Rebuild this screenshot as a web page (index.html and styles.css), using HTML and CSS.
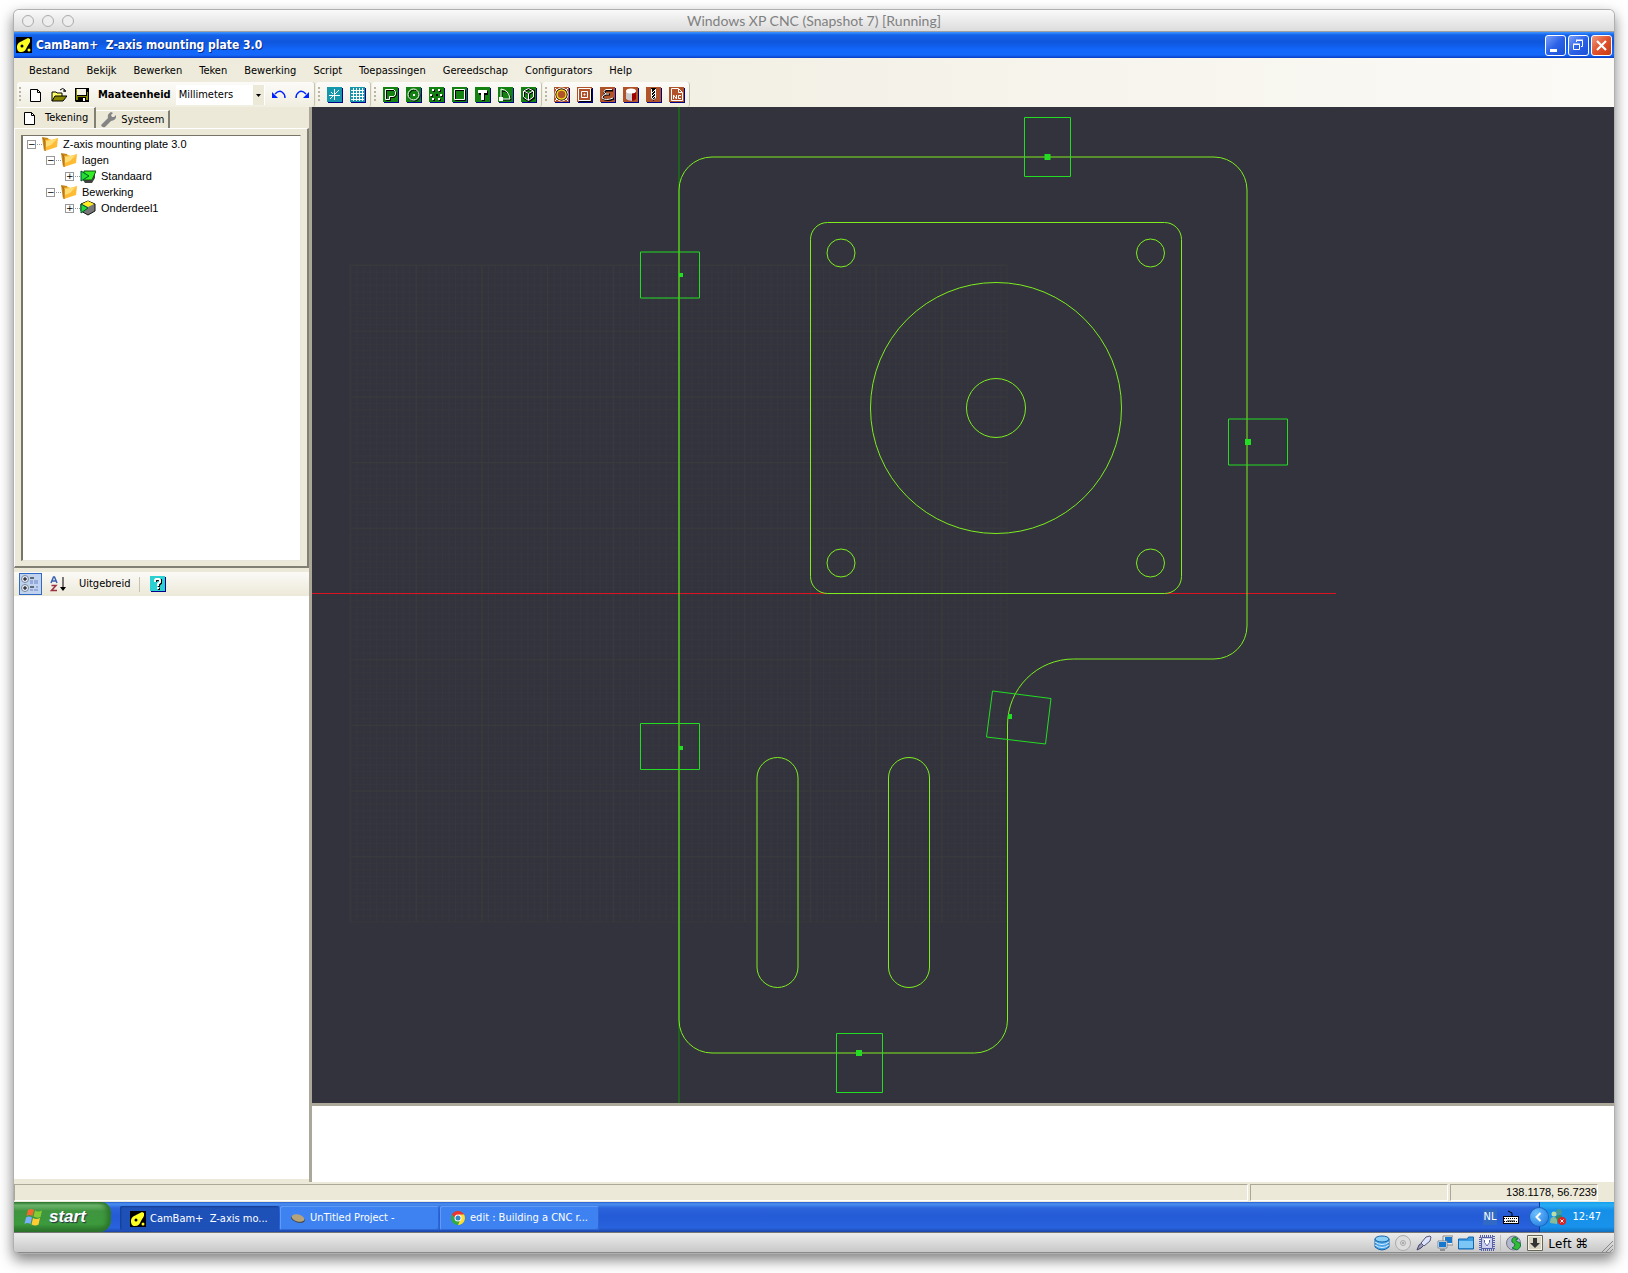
FILE: index.html
```
<!DOCTYPE html>
<html lang="nl">
<head>
  <meta charset="UTF-8">
  <title>Windows XP CNC (Snapshot 7) [Running]</title>
  <link rel="stylesheet" href="styles.css">
</head>
<body>
  <!-- shared icons -->
  <svg class="defs" width="0" height="0">
    <defs>
      <symbol id="cambam" viewBox="0 0 16 16">
        <rect width="16" height="16" fill="#000"/>
        <path d="M1 10C1 6 4 5 8 3l4-2 2 1v3l-3 5c-1 3-3 5-6 5S1 13 1 10z" fill="#ff2"/>
        <circle cx="6" cy="9" r="1.500"/><circle cx="13" cy="13" r="1.500" fill="#ff2"/>
      </symbol>
      <symbol id="page" viewBox="0 0 16 16">
        <path d="M2.500 2.500h7l3 3v9h-10z" fill="#fff" stroke="#000"/><path d="M9.500 2.500v3h3" fill="none" stroke="#000"/>
      </symbol>
      <symbol id="folder" viewBox="0 0 16 16">
        <path d="M0 1l6 1 1 2-5 11z" fill="#c68a1c"/>
        <path d="M3 4l5-1 1 1 7-2-1 9-12 4z" fill="#fb3"/><path d="M4 5l11-2-6 6-5 2z" fill="#fd7"/>
        <path d="M1 2l2 3v10" fill="none" stroke="#a76b12"/>
      </symbol>
      <symbol id="green" viewBox="0 0 16 16">
        <rect x="1" y="1" width="15" height="15" fill="#008"/><rect width="15" height="15" fill="#138213"/>
      </symbol>
      <symbol id="brown" viewBox="0 0 16 16">
        <rect x="1" y="1" width="15" height="15" fill="#008"/><rect width="15" height="15" fill="#b0522a"/>
      </symbol>
    </defs>
  </svg>

  <main class="window">
    <header class="mac-title">
      <div class="lights"><i></i><i></i><i></i></div>
      <span>Windows XP CNC (Snapshot 7) [Running]</span>
    </header>

    <div class="xp-title">
      <svg class="icon"><use href="#cambam"/></svg>
      <h1>CamBam+&nbsp; Z-axis mounting plate 3.0</h1>
      <button class="win-btn" aria-label="Minimize"><svg viewBox="0 0 19 19"><path d="M4 13h7v3H4z" fill="#fff"/></svg></button>
      <button class="win-btn" aria-label="Restore"><svg viewBox="0 0 19 19" fill="none" stroke="#fff"><path d="M4.500 8.500h6v5h-6zM4 8h7M7.500 6V4.500h6v6H12M7 4h7"/></svg></button>
      <button class="win-btn close" aria-label="Close"><svg viewBox="0 0 19 19"><path d="M5 5l9 9M14 5l-9 9" stroke="#fff" stroke-width="2.200"/></svg></button>
    </div>

    <nav class="menu">
      <button>Bestand</button><button>Bekijk</button><button>Bewerken</button><button>Teken</button><button>Bewerking</button><button>Script</button><button>Toepassingen</button><button>Gereedschap</button><button>Configurators</button><button>Help</button>
    </nav>

    <div class="toolbars">
      <div class="bar bar-file">
        <i class="grip"></i>
        <button aria-label="Nieuw"><svg class="icon"><use href="#page"/></svg></button>
        <button aria-label="Openen"><svg class="icon" viewBox="0 0 16 16"><path d="M1 14V5h4l1 1h5v3" fill="#ff6" stroke="#000"/><path d="M1 14l3-5h12l-4 5z" fill="#880" stroke="#000"/><path d="M9 3q3-3 5 0v2m-2-1h3" fill="none" stroke="#000"/></svg></button>
        <button aria-label="Opslaan"><svg class="icon" viewBox="0 0 16 16"><path d="M1 1h14v14H2l-1-1z"/><path d="M3 2h9v6H3z" fill="#f5f3e8"/><path d="M2 2h1v7h10V5h1v8H2z" fill="#880"/><path d="M4 10h8v5H4z"/><path d="M9 11h2v3H9z" fill="#fff"/></svg></button>
        <label for="unit">Maateenheid</label>
        <div class="unit">
          <select id="unit"><option>Millimeters</option><option>Inches</option></select>
          <svg viewBox="0 0 11 20"><path d="M3 9h5l-2.500 3z"/></svg>
        </div>
        <button aria-label="Ongedaan maken"><svg class="icon" viewBox="0 0 16 16"><path d="M4 7q4-4 7-2 3 2 3 6" fill="none" stroke="#02f" stroke-width="1.500"/><path d="M1 5v6h6z" fill="#02f"/></svg></button>
        <button aria-label="Opnieuw"><svg class="icon" viewBox="0 0 16 16"><path d="M12 7Q8 3 5 5q-3 2-3 6" fill="none" stroke="#02f" stroke-width="1.500"/><path d="M15 5v6H9z" fill="#02f"/></svg></button>
      </div>
      <div class="bar">
        <i class="grip"></i>
        <button aria-label="Snap"><svg class="icon" viewBox="0 0 16 16"><rect x="1" y="1" width="15" height="15" fill="#008"/><rect width="15" height="15" fill="#1697ac"/><path d="M7.500 2v11M2 8.500h11M3 12l9-9M4 5l2 2" stroke="#fff" fill="none"/></svg></button>
        <button aria-label="Raster"><svg class="icon" viewBox="0 0 16 16"><rect x="1" y="1" width="15" height="15" fill="#008"/><rect width="15" height="15" fill="#1697ac"/><path d="M3.500 1v13M6.500 1v13M9.500 1v13M12.500 1v13M1 3.500h13M1 6.500h13M1 9.500h13M1 12.500h13" stroke="#fff"/></svg></button>
      </div>
      <div class="bar">
        <i class="grip"></i>
        <button aria-label="Polylijn"><svg class="icon" viewBox="0 0 16 16"><use href="#green"/><path d="M3.500 3.500h8l2 2v3l-2 2h-4v3h-4z" fill="none" stroke="#000"/><path d="M2.500 2.500h8l2 2v3l-2 2h-4v3h-4z" fill="none" stroke="#fff"/></svg></button>
        <button aria-label="Cirkel"><svg class="icon" viewBox="0 0 16 16"><use href="#green"/><circle cx="8.500" cy="8.500" r="5.500" fill="none" stroke="#000"/><circle cx="7.500" cy="7.500" r="5.500" fill="none" stroke="#fff"/><path d="M7 7h2v2H7z" fill="#fff"/></svg></button>
        <button aria-label="Puntenlijst"><svg class="icon" viewBox="0 0 16 16"><use href="#green"/><path d="M4 3h2v2H4zM10 3h2v2h-2zM2 8h2v2H2zM7 7h2v2H7zM12 8h2v2h-2zM4 12h2v2H4zM10 12h2v2h-2z"/><path d="M3 2h2v2H3zM9 2h2v2H9zM1 7h2v2H1zM11 7h2v2h-2zM3 11h2v2H3zM9 11h2v2H9z" fill="#fff"/></svg></button>
        <button aria-label="Rechthoek"><svg class="icon" viewBox="0 0 16 16"><use href="#green"/><path d="M3.500 3.500h10v10h-10z" fill="none" stroke="#000"/><path d="M2.500 2.500h10v10h-10z" fill="none" stroke="#fff"/></svg></button>
        <button aria-label="Tekst"><svg class="icon" viewBox="0 0 16 16"><use href="#green"/><path d="M4 4h9v4h-3v6H7V8H4z"/><path d="M3 3h9v3H9v7H6V6H3z" fill="#fff"/></svg></button>
        <button aria-label="Boog"><svg class="icon" viewBox="0 0 16 16"><use href="#green"/><path d="M4 13V4q8 0 9 9z" fill="none" stroke="#000"/><path d="M3 12V2q8 1 9 10z" fill="none" stroke="#fff"/><path d="M1 10h4v4H1z" fill="#fff"/></svg></button>
        <button aria-label="Oppervlak"><svg class="icon" viewBox="0 0 16 16"><use href="#green"/><path d="M8 2l5 2v7l-5 3-5-3V4zM3 4l5 3 5-3M8 7v7" fill="none" stroke="#000" stroke-width="2"/><path d="M7.500 1.500l5 2.500v6l-5 3.500-5-3.500V4zM3 4l4.500 2.500L12 4M7.500 7v6" fill="none" stroke="#fff"/></svg></button>
      </div>
      <div class="bar">
        <i class="grip"></i>
        <button aria-label="Profiel"><svg class="icon" viewBox="0 0 16 16"><use href="#brown"/><circle cx="7.500" cy="7.500" r="6.500" fill="none" stroke="#fff"/><circle cx="7.500" cy="7.500" r="5" fill="#b0522a" stroke="#000" stroke-width="2"/><circle cx="7.500" cy="7.500" r="4.500" fill="none" stroke="#fd2" stroke-width="1.500"/><path d="M1 1l2 2M14 1l-2 2M1 14l2-2M14 14l-2-2" stroke="#fff"/></svg></button>
        <button aria-label="Kamer"><svg class="icon" viewBox="0 0 16 16"><use href="#brown"/><path d="M1.500 1.500h12v12h-12zM4.500 4.500h6v6h-6zM7 7h1v1H7z" fill="none" stroke="#fff"/><path d="M2 14.500h12.500V2" fill="none" stroke="#000"/></svg></button>
        <button aria-label="Graveren"><svg class="icon" viewBox="0 0 16 16"><use href="#brown"/><path d="M13 3.500H6q-3 2 0 4h4M6 7.500q-4 1-3 4 4 3 11 0" fill="none" stroke="#000" stroke-width="2"/><path d="M12 2.500H6q-4 2 0 4.500h3M6 7q-4 1-4 4 4 3 11 0" fill="none" stroke="#fff"/></svg></button>
        <button aria-label="3D profiel"><svg class="icon" viewBox="0 0 16 16"><use href="#brown"/><path d="M3 4h10v8q-5 4-10 0z" fill="#a00000"/><path d="M3 4h6v10q-4 0-6-2z" fill="#ccc"/><ellipse cx="8" cy="4" rx="5" ry="2.500" fill="#fff"/></svg></button>
        <button aria-label="Boren"><svg class="icon" viewBox="0 0 16 16"><use href="#brown"/><path d="M5 1h5v10l-2.500 3L5 11z"/><path d="M5.500 2v9l2 2 2-2V2M9 3L6 6M9 6L6 9M9 9l-3 3" fill="none" stroke="#fff"/></svg></button>
        <button aria-label="NC bestand"><svg class="icon" viewBox="0 0 16 16"><use href="#brown"/><path d="M2.500 1.500h7l4 4v8h-11zM9.500 2v3.500H13" fill="none" stroke="#fff"/><path d="M4.500 12V8l3 4V8M12 8.500H9.500v3H12" fill="none" stroke="#fff"/></svg></button>
      </div>
    </div>

    <div class="workspace">
      <aside class="side">
        <div class="tabs">
          <button class="tab active"><svg class="icon"><use href="#page"/></svg>Tekening</button>
          <button class="tab"><svg class="icon" viewBox="0 0 16 16"><path d="M1 13l7-7q-1-4 3-6l2 1-2 2 1 2 2 0 2-2q1 5-5 6l-6 6q-3 1-4-2z" fill="#848484"/></svg>Systeem</button>
        </div>
        <div class="tab-page">
          <ul class="tree">
            <li><div class="row"><button class="exp">&minus;</button><svg class="icon"><use href="#folder"/></svg><span>Z-axis mounting plate 3.0</span></div>
              <ul>
                <li><div class="row"><button class="exp">&minus;</button><svg class="icon"><use href="#folder"/></svg><span>lagen</span></div>
                  <ul>
                    <li><div class="row"><button class="exp">+</button><svg class="icon" viewBox="0 0 16 16"><path d="M3 12h9l3-7v5l-3 5H5z" fill="#444"/><path d="M4 3h12l-4 9H3z" fill="#3e2" stroke="#174d17"/><path d="M1 3l8 5-8 5z" fill="#2d3" stroke="#053"/></svg><span>Standaard</span></div></li>
                  </ul>
                </li>
                <li><div class="row"><button class="exp">&minus;</button><svg class="icon"><use href="#folder"/></svg><span>Bewerking</span></div>
                  <ul>
                    <li><div class="row"><button class="exp">+</button><svg class="icon" viewBox="0 0 16 16"><path d="M8 1l7 3v7l-7 4-7-4V4z" fill="#777" stroke="#111"/><path d="M8 1l6 3-6 3-6-3z" fill="#fe2"/><path d="M1 4l7 4-7 5z" fill="#2d3" stroke="#053"/></svg><span>Onderdeel1</span></div></li>
                  </ul>
                </li>
              </ul>
            </li>
          </ul>
        </div>
        <div class="prop-bar">
          <button class="on" aria-label="Categorie"><svg class="icon" viewBox="0 0 18 18"><g fill="#e4ecfa" stroke="#789"><circle cx="4" cy="4" r="3.500"/><circle cx="4" cy="13" r="3.500"/></g><path d="M2 4h4M4 2v4M2 13h4M4 11v4M9 3h4M9 12h4" stroke="#000"/><path d="M9 6h3M13 6h4M9 8h3M13 8h4M9 15h3M13 15h4M15 12h2" stroke="#6a82c8"/></svg></button>
          <button aria-label="Alfabetisch"><svg class="icon" viewBox="0 0 16 16"><path d="M1 7l2.500-6h1L7 7M2 5h4" fill="none" stroke="#3b62b0" stroke-width="1.500"/><path d="M1.500 9.500H6l-4.500 5H7" fill="none" stroke="#9b3040" stroke-width="1.500"/><path d="M13 1v12" stroke="#000"/><path d="M10 11h6l-3 4z"/></svg></button>
          <button class="adv">Uitgebreid</button>
          <i class="sep"></i>
          <button aria-label="Help"><svg class="icon" viewBox="0 0 16 16"><rect x="1" y="1" width="15" height="15" fill="#008"/><rect width="15" height="15" fill="#2cd0d0"/><path d="M6 6V4h5v3L9 9v2M9 12v2" fill="none" stroke="#000" stroke-width="2"/><path d="M5 6V4l1-1h3l1 1v2L8 8v2M8 11v2" fill="none" stroke="#fff" stroke-width="2"/></svg></button>
        </div>
        <div class="props"></div>
      </aside>

      <section class="main">
        <!-- origin is the crossing of the two axes -->
        <svg class="canvas" viewBox="-367 -486 1302 996" preserveAspectRatio="xMidYMid slice">
          <defs>
            <pattern id="minor" width="6.570" height="6.570" patternUnits="userSpaceOnUse"><path d="M0 0h6.570M0 0v6.570" stroke="#383a3e" fill="none"/></pattern>
            <pattern id="major" width="65.700" height="65.700" patternUnits="userSpaceOnUse"><path d="M0 0h65.700M0 0v65.700" stroke="#393a3c" stroke-width="2" fill="none"/></pattern>
          </defs>
          <g transform="translate(-329 -328)">
            <rect width="657" height="657" fill="url(#minor)"/>
            <rect width="657" height="657" fill="url(#major)" stroke="#38393c"/>
          </g>
          <path class="axis-y" d="M0-486V510"/>
          <path class="axis-x" d="M-367 .500H657"/>
          <g class="part">
            <path d="M33-436H535A33 33 0 0 1 568-403V33A33 33 0 0 1 535 66H394.500A66 66 0 0 0 328.500 132V427A33 33 0 0 1 295.500 460H33A33 33 0 0 1 0 427V-403A33 33 0 0 1 33-436Z"/>
            <rect x="131.500" y="-370.500" width="371" height="371" rx="17"/>
            <circle cx="162" cy="-340" r="14"/>
            <circle cx="471.500" cy="-340" r="14"/>
            <circle cx="162" cy="-30" r="14"/>
            <circle cx="471.500" cy="-30" r="14"/>
            <circle cx="317" cy="-185" r="125.500"/>
            <circle cx="317" cy="-185" r="29.500"/>
            <rect x="78" y="164.500" width="41" height="230" rx="20.500"/>
            <rect x="209.500" y="164.500" width="41" height="230" rx="20.500"/>
          </g>
          <g class="tab-box">
            <rect x="345.500" y="-475.500" width="46" height="59"/>
            <rect x="-38.500" y="-341" width="59" height="46"/>
            <rect x="-38.500" y="130.500" width="59" height="46"/>
            <rect x="549.500" y="-174" width="59" height="46"/>
            <rect x="157.500" y="440.500" width="46" height="59"/>
            <path d="M313.500 98l58.500 7.500-5.500 45.500-59-7z"/>
          </g>
          <g class="tab-dot">
            <rect x="365.500" y="-439" width="6" height="6"/>
            <rect x="0" y="-320" width="4" height="4"/>
            <rect x="0" y="153" width="4" height="4"/>
            <rect x="566" y="-154" width="6" height="6"/>
            <rect x="177" y="457" width="6" height="6"/>
            <rect x="329" y="121" width="4" height="5"/>
          </g>
        </svg>
        <div class="console"></div>
      </section>
    </div>

    <footer class="status">
      <span></span><span></span><span>138.1178, 56.7239</span>
    </footer>

    <div class="taskbar">
      <button class="start">
        <svg viewBox="0 0 20 20"><path d="M4 3q3-2 6 0L8.500 9q-3-2-6 0z" fill="#f26a2e"/><path d="M11 3.500q3 2 7 0L16.500 10q-3 1.500-7-.500z" fill="#8c3"/><path d="M2 10.500q3-2 6 0L6.500 17q-3-2-6 0z" fill="#7ab0ff"/><path d="M9 11q3 2 7 0l-1.500 6.500q-3 2-7 0z" fill="#fc3"/></svg>start
      </button>
      <div class="tasks">
        <button class="task current"><svg class="icon"><use href="#cambam"/></svg>CamBam+&nbsp; Z-axis mo...</button>
        <button class="task"><svg class="icon" viewBox="0 0 16 16"><ellipse cx="8" cy="9" rx="7" ry="3.500" transform="rotate(15 8 9)" fill="#444"/><ellipse cx="8" cy="8" rx="6.500" ry="3.500" transform="rotate(15 8 8)" fill="#b6a37c"/></svg>UnTitled Project -</button>
        <button class="task"><svg class="icon" viewBox="0 0 16 16"><circle cx="8" cy="8" r="7" fill="#3a4"/><path d="M2 4.500a7 7 0 0 1 12 0L8 8H5z" fill="#e33"/><path d="M14 4.500A7 7 0 0 1 8 15l3-7-2-3.500z" fill="#fd3"/><circle cx="8" cy="8" r="3.500" fill="#fff"/><circle cx="8" cy="8" r="2.500" fill="#38c"/></svg>edit : Building a CNC r...</button>
      </div>
      <span class="lang">NL</span>
      <svg class="icon keys" viewBox="0 0 16 16"><path d="M0 7h16v8H0z"/><path d="M1 8h14v6H1z" fill="#fff"/><path d="M1 9.500h14M1 12.500h14" stroke="#000" stroke-dasharray="1 1"/><path d="M4 12h8" stroke="#000"/><path d="M9 7V4l-2-1-2-1" fill="none" stroke="#000"/></svg>
      <div class="tray">
        <button class="chevron" aria-label="Verborgen pictogrammen"><svg viewBox="0 0 18 18"><path d="M10.500 5l-4 4 4 4" fill="none" stroke="#fff" stroke-width="2"/></svg></button>
        <svg class="icon" viewBox="0 0 16 16"><circle cx="9" cy="3" r="3" fill="#499"/><path d="M5 12q0-7 6-6l3 4-3 4z" fill="#386"/><circle cx="4" cy="5" r="2.500" fill="#bda"/><path d="M0 14q0-7 4-6 4 1 3 7z" fill="#8b9"/><circle cx="12" cy="12" r="4" fill="#d22"/><path d="M10.500 10.500l3 3m0-3l-3 3" stroke="#fff"/></svg>
        <time>12:47</time>
      </div>
    </div>

    <footer class="vm-bar">
      <svg class="icon" viewBox="0 0 16 16"><path d="M1 4v8q7 6 14 0V4z" fill="#4aa5e8" stroke="#1564a8"/><path d="M1 7q7 5 14 0M1 10q7 5 14 0" fill="none" stroke="#def"/><ellipse cx="8" cy="4" rx="7" ry="3" fill="#8cd0f8" stroke="#1564a8"/></svg>
      <svg class="icon" viewBox="0 0 16 16" fill="#ddd" stroke="#aaa"><circle cx="8" cy="8" r="7.500"/><circle cx="8" cy="8" r="2.500"/><path d="M7 8h2" stroke="#777"/></svg>
      <svg class="icon" viewBox="0 0 16 16"><path d="M1 15l2-5 3-2 2 2-3 3z" fill="#99b" stroke="#446"/><path d="M5 8l5-6 4-1 1 1-1 4-6 5z" fill="#dde4ff" stroke="#557"/></svg>
      <svg class="icon" viewBox="0 0 16 16"><path d="M6 1h10v9H6z" fill="#eee" stroke="#888"/><path d="M8 2h7v6H8z" fill="#1878d0"/><path d="M1 6h9v7H1z" fill="#fff" stroke="#789"/><path d="M2 7h7v5H2z" fill="#1878d0"/><path d="M3 15h5" stroke="#555"/></svg>
      <svg class="icon" viewBox="0 0 16 16"><path d="M.500 14V4h9l1-2h5v12z" fill="#3a9be0" stroke="#1466ae"/><path d="M1 6h14v7H1z" fill="#7cc6f6"/></svg>
      <svg class="icon" viewBox="0 0 16 16"><path d="M1 1h14v14H1z" fill="none" stroke="#5560a8" stroke-width="2" stroke-dasharray="1 1"/><path d="M2.500 2.500h11v11h-11z" fill="#ccd0ee" stroke="#5560a8"/><path d="M5 4h6v4l-3 4-3-4z" fill="#fff"/><path d="M5.500 5v2.500L8 11l2.500-3.500V5" fill="none" stroke="#5560a8"/></svg>
      <i class="vm-sep"></i>
      <svg class="icon" viewBox="0 0 16 16"><circle cx="7.500" cy="8" r="7" fill="#b4b8cc" stroke="#778"/><path d="M9 2q-4 1-3 5l3 2q0 3-3 4l5 2q5-3 3-7l-4-2q-1-2 2-2z" fill="#3b3" stroke="#174"/></svg>
      <svg class="icon" viewBox="0 0 16 16"><path d="M.500.500h15v15H.500z" fill="#f4f0e4" stroke="#665"/><path d="M2 2h12v12H2z" fill="#d8d4c4"/><path d="M6 3h4v5h3l-5 5-5-5h3z" fill="#333"/></svg>
      <span>Left ⌘</span>
      <svg class="icon resize" viewBox="0 0 12 12"><path d="M1 12L12 1M5 12l7-7M9 12l3-3" stroke="#888"/></svg>
    </footer>
  </main>
</body>
</html>
```
FILE: styles.css
```
* { box-sizing: border-box; }
body {
  margin: 0;
  min-height: 100vh;
  padding: 10px 14px 20px;
  display: flex;
  background: #fff;
  color: #000;
  font: 11px/16px "DejaVu Sans Condensed", "DejaVu Sans", sans-serif;
}
button { border: 0; padding: 0; margin: 0; background: none; font: inherit; color: inherit; }
.defs { position: absolute; }
.icon { width: 16px; height: 16px; display: block; flex: none; }

.window {
  flex: 1;
  display: flex;
  flex-direction: column;
  border-radius: 5px;
  overflow: hidden;
  background: #ece9d8;
  box-shadow: 0 0 0 1px #b0b0b0, 0 6px 14px 1px rgba(0, 0, 0, .5);
}

/* mac title */
.mac-title {
  height: 22px;
  display: grid;
  grid-template-columns: 1fr auto 1fr;
  align-items: center;
  padding: 0 8px;
  background: linear-gradient(#fafafa, #dcdcdc);
  border-bottom: 1px solid #a0a0a0;
  color: #808080;
  font: 14px/20px "Lato", sans-serif;
}
.lights { display: flex; gap: 8px; }
.lights i { width: 12px; height: 12px; border: 1px solid #aaa; border-radius: 50%; background: #eee; }

/* xp title */
.xp-title {
  height: 26px;
  display: flex;
  align-items: center;
  gap: 2px;
  padding: 0 2px;
  background: linear-gradient(#3f96ff 0, #1362ea 3px, #0f56dc 10px, #1267fb 18px, #1468fb 23px, #0a3cc0 26px);
}
.xp-title h1 {
  flex: 1;
  margin: 0 2px;
  color: #fff;
  font: bold 12px "DejaVu Sans Condensed", "DejaVu Sans", sans-serif;
  text-shadow: 1px 1px #0b2a80;
}
.win-btn {
  width: 21px;
  height: 21px;
  border: 1px solid #fff;
  border-radius: 3px;
  background: linear-gradient(135deg, #7ba0f8, #2c62e8 50%, #1a50d8);
}
.win-btn svg { display: block; width: 19px; height: 19px; }
.close { background: linear-gradient(135deg, #f09a80, #e0512c 50%, #c83a14); }

/* menu and toolbars */
.menu, .toolbars { background: linear-gradient(90deg, #ece9d8, #fbfaf6); }
.menu { height: 24px; display: flex; gap: 17px; padding: 2px 15px 0; }
.toolbars { height: 25px; display: flex; gap: 1px; padding: 0 3px; }
.bar {
  display: flex;
  align-items: center;
  padding-right: 1px;
  background: linear-gradient(#fcfbf8, #f0eee0);
  border-right: 1px solid #c5c2b0;
  border-radius: 3px;
}
.bar button { width: 23px; padding: 0 3px 0 4px; }
.grip { width: 2px; height: 15px; margin: 0 3px 0 2px; background: repeating-linear-gradient(#b8b5a4 0 2px, transparent 2px 4px); }
.bar label { margin: 0 5px; font-weight: bold; }
.unit { position: relative; width: 89px; height: 20px; margin-right: 2px; }
.unit select { appearance: none; width: 100%; height: 100%; border: 0; padding: 0 3px; background: #fff; font: inherit; }
.unit svg { position: absolute; right: 1px; top: 0; width: 11px; height: 20px; background: #ece9d8; pointer-events: none; }

.workspace { flex: 1; display: flex; min-height: 480px; }

/* left panel */
.side { width: 298px; display: flex; flex-direction: column; border-right: 3px solid #aca899; padding-bottom: 3px; }
.tabs { height: 21px; display: flex; align-items: flex-end; padding-left: 2px; }
.tab {
  height: 18px;
  display: flex;
  align-items: center;
  gap: 5px;
  padding: 0 4px;
  border-top: 1px solid #fff;
  border-right: 2px solid #808074;
}
.tab.active { height: 21px; padding: 0 6px 1px; gap: 7px; }
.tab-page { height: 440px; padding: 6px 6px 5px; border: solid; border-width: 1px 2px 2px 1px; border-color: #fff #808074 #808074 #fff; }
.tree, .tree ul { margin: 0; padding: 0; list-style: none; }
.tree {
  height: 100%;
  overflow: hidden;
  padding-left: 4px;
  background: #fff;
  border: solid;
  border-width: 1px 1px 1px 2px;
  border-color: #777468 #e8e6dc #e8e6dc #777468;
  font: 11px/16px "Liberation Sans", Arial, sans-serif;
}
.tree ul { padding-left: 19px; }
.row { height: 16px; display: flex; align-items: center; }
.row span { margin-left: 5px; white-space: nowrap; }
.exp { width: 9px; height: 9px; margin-right: 6px; border: 1px solid #999; background: #fff; font: 9px/6px "DejaVu Sans", sans-serif; position: relative; }
.exp::after { content: ""; position: absolute; left: 9px; top: 3px; width: 5px; border-top: 1px dotted #999; }

.prop-bar {
  height: 24px;
  margin-top: 4px;
  display: flex;
  align-items: center;
  padding-left: 5px;
  background: linear-gradient(#fbfaf7, #ece9d8);
}
.prop-bar .on { width: 23px; height: 22px; padding: 1px; border: 1px solid #316ac5; background: #c1d2ee; }
.prop-bar .on .icon { width: 18px; height: 18px; }
.prop-bar button + button { margin-left: 8px; }
.prop-bar .adv { margin: 0 9px 0 13px; }
.sep { width: 1px; height: 15px; margin-right: 10px; background: #c5c2b0; }
.props { flex: 1; background: #fff; }

/* drawing */
.main { flex: 1; min-width: 0; display: flex; flex-direction: column; }
.canvas { flex: 1; width: 100%; height: 0; display: block; background: #33333d; }
.canvas path, .canvas rect, .canvas circle { vector-effect: non-scaling-stroke; }
.axis-y { stroke: #1f5f20; stroke-width: 2; }
.axis-x { stroke: #dd1122; }
.part { fill: none; stroke: #7cee1e; }
.tab-box { fill: none; stroke: #22dd22; }
.tab-dot { fill: #22dd22; }
.console { height: 79px; border-top: 3px solid #aca899; background: #fff; }

/* status bar */
.status { height: 20px; display: grid; grid-template-columns: 1fr 198px 148px; gap: 2px; padding: 2px 16px 1px 0; }
.status span {
  border: 1px solid;
  border-color: #aca899 #fff #fff #aca899;
  text-align: right;
  font: 11px/15px "Liberation Sans", Arial, sans-serif;
}

/* taskbar */
.taskbar {
  height: 30px;
  display: flex;
  align-items: center;
  color: #fff;
  background: linear-gradient(#2a5fd0 0, #4a90f0 2px, #2c64dc 6px, #245bd6 14px, #2862dc 26px, #1a45a8 30px);
}
.start {
  width: 97px;
  height: 30px;
  display: flex;
  align-items: center;
  gap: 5px;
  padding: 0 10px;
  border-radius: 0 10px 12px 0;
  background: linear-gradient(#2e7a2e 0, #72b872 3px, #3f953f 9px, #3c9a3c 22px, #2a6e2a 30px);
  box-shadow: inset -4px 0 5px #2b742b;
  font: italic bold 17px "Liberation Sans", Arial, sans-serif;
  text-shadow: 1px 1px 1px #234;
}
.start svg { width: 20px; height: 20px; }
.tasks { flex: 1; display: flex; gap: 1px; padding: 1px 0 0 9px; }
.task {
  width: 159px;
  height: 24px;
  display: flex;
  align-items: center;
  gap: 4px;
  padding: 0 10px;
  border-radius: 2px;
  background: #3d82f0;
  box-shadow: inset 1px 1px #5f9bf7, inset -1px -1px #2f68d0;
  white-space: nowrap;
}
.task.current { padding-top: 2px; background: #1e51b8; box-shadow: inset 1px 1px 2px #143c90; }
.lang { padding: 0 1px; margin-right: 6px; background: #316ac5; }
.tray {
  height: 30px;
  margin-left: 20px;
  padding: 0 13px 0 11px;
  display: flex;
  align-items: center;
  gap: 6px;
  background: linear-gradient(#14a0f0, #2aaef4 3px, #1590e8 8px, #1892ea 25px, #1070c0);
  border-left: 1px solid #0c3c9c;
}
.chevron {
  width: 18px;
  height: 18px;
  margin: 0 -4px 0 -21px;
  border-radius: 50%;
  background: radial-gradient(circle at 35% 30%, #6cc0ff, #1a74dc);
  box-shadow: 0 0 0 1px #2060b8;
}
.chevron svg { display: block; }

/* vm status */
.vm-bar {
  height: 21px;
  display: flex;
  align-items: center;
  justify-content: flex-end;
  gap: 5px;
  padding-right: 1px;
  background: linear-gradient(#ececec, #c8c8c8);
  border-top: 1px solid #777;
  border-bottom: 1px solid #8a8a8a;
  font: 13px "Noto Sans", "DejaVu Sans", sans-serif;
}
.vm-sep { width: 1px; height: 16px; background: #eee; border-left: 1px solid #bbb; }
.resize { width: 12px; height: 12px; margin-left: 8px; align-self: flex-end; }
```
